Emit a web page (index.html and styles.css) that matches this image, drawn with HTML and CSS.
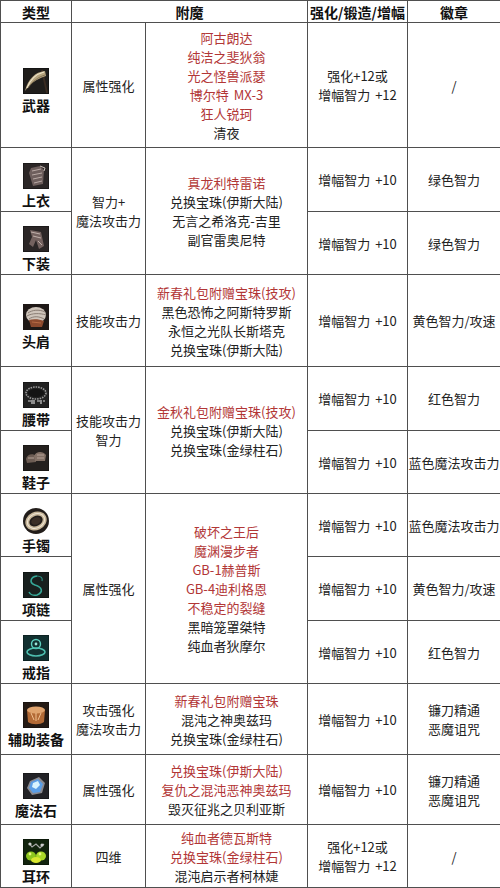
FILE: index.html
```html
<!DOCTYPE html>
<html lang="zh-CN">
<head>
<meta charset="utf-8">
<title>装备附魔表</title>
<link rel="stylesheet" href="styles.css">
</head>
<body>
<table class="gear">
  <colgroup>
    <col class="c-type"><col class="c-attr"><col class="c-ench"><col class="c-amp"><col class="c-badge">
  </colgroup>
  <thead>
    <tr class="r-head">
      <th>类型</th>
      <th colspan="2">附魔</th>
      <th>强化/锻造/增幅</th>
      <th>徽章</th>
    </tr>
  </thead>
  <tbody>
    <tr class="r-125">
      <td class="type">
        <svg class="icon" viewBox="0 0 26 26"><rect width="26" height="26" fill="#141414"/><rect x="1" y="1" width="24" height="24" fill="#1f1d1b"/><path d="M19 2 L24 25" stroke="#3b2c22" stroke-width="1.8"/><path d="M22 3 C12 4 5 11 2 23 C7 16 13 11 23 8 Z" fill="#b8a680"/><path d="M21 4 C13 6 7 12 4 20" stroke="#efe6cc" stroke-width="1.1" fill="none"/><path d="M22 7 C15 9 9 14 5 20" stroke="#7a6a4c" stroke-width="0.8" fill="none"/></svg>
        <span class="label">武器</span>
      </td>
      <td>属性强化</td>
      <td class="ench"><span class="red">阿古朗达<br>纯洁之斐狄翁<br>光之怪兽派瑟<br>博尔特 MX-3<br>狂人锐珂</span><br>清夜</td>
      <td>强化+12或<br>增幅智力 +12</td>
      <td>/</td>
    </tr>
    <tr class="r-64">
      <td class="type">
        <svg class="icon" viewBox="0 0 26 26"><rect width="26" height="26" fill="#1c1a1a"/><rect x="1" y="1" width="24" height="24" fill="#2b2626"/><path d="M8 5 L17 3 L21 7 L20 21 L10 23 L6 10 Z" fill="#6e5f5d"/><path d="M9 8 L18 6 M9 12 L19 10 M10 16 L19 14 M11 20 L19 18" stroke="#b9aaa5" stroke-width="1"/><path d="M17 3 L22 5 L21 8" stroke="#c9bcb6" stroke-width="1" fill="none"/></svg>
        <span class="label">上衣</span>
      </td>
      <td rowspan="2">智力+<br>魔法攻击力</td>
      <td rowspan="2" class="ench"><span class="red">真龙利特雷诺</span><br>兑换宝珠(伊斯大陆)<br>无言之希洛克-吉里<br>副官雷奥尼特</td>
      <td>增幅智力 +10</td>
      <td>绿色智力</td>
    </tr>
    <tr class="r-63">
      <td class="type">
        <svg class="icon" viewBox="0 0 26 26"><rect width="26" height="26" fill="#1c1a1a"/><rect x="1" y="1" width="24" height="24" fill="#2b2626"/><path d="M7 4 L18 6 L21 20 L16 23 L13 14 L10 21 L6 18 L9 11 Z" fill="#74625f"/><path d="M8 6 L17 8 M10 10 L18 12 M15 15 L19 19" stroke="#c0b0aa" stroke-width="1"/></svg>
        <span class="label">下装</span>
      </td>
      <td>增幅智力 +10</td>
      <td>绿色智力</td>
    </tr>
    <tr class="r-92">
      <td class="type">
        <svg class="icon" viewBox="0 0 26 26"><rect width="26" height="26" fill="#1e1816"/><ellipse cx="13" cy="11" rx="10" ry="8" fill="#cfc5bb"/><path d="M5 9 C9 6 16 5 22 8 M4 12 C9 9 17 9 23 11 M6 15 C10 12 16 12 21 15" stroke="#8a7d74" stroke-width="1" fill="none"/><path d="M6 16 C10 15 16 15 21 17 L19 23 L8 23 Z" fill="#8d4a2e"/><path d="M9 18 L18 19" stroke="#b86a44" stroke-width="1"/></svg>
        <span class="label">头肩</span>
      </td>
      <td>技能攻击力</td>
      <td class="ench"><span class="red">新春礼包附赠宝珠(技攻)</span><br>黑色恐怖之阿斯特罗斯<br>永恒之光队长斯塔克<br>兑换宝珠(伊斯大陆)</td>
      <td>增幅智力 +10</td>
      <td>黄色智力/攻速</td>
    </tr>
    <tr class="r-64">
      <td class="type">
        <svg class="icon" viewBox="0 0 26 26"><rect width="26" height="26" fill="#181818"/><rect x="1" y="1" width="24" height="24" fill="#222"/><ellipse cx="13" cy="11" rx="10" ry="6" fill="none" stroke="#9a9a9a" stroke-width="1.6" stroke-dasharray="1.5 1"/><ellipse cx="13" cy="11" rx="8" ry="4" fill="#141414"/><path d="M5 19 L8 19 M9 18 L9 22 M11 18 L11 22 M14 19 L17 19 M18 18 L18 22 M20 19 L22 19" stroke="#d6d6d6" stroke-width="1.2"/></svg>
        <span class="label">腰带</span>
      </td>
      <td rowspan="2">技能攻击力<br>智力</td>
      <td rowspan="2" class="ench"><span class="red">金秋礼包附赠宝珠(技攻)</span><br>兑换宝珠(伊斯大陆)<br>兑换宝珠(金绿柱石)</td>
      <td>增幅智力 +10</td>
      <td>红色智力</td>
    </tr>
    <tr class="r-63">
      <td class="type">
        <svg class="icon" viewBox="0 0 26 26"><rect width="26" height="26" fill="#1a1816"/><rect x="1" y="1" width="24" height="24" fill="#24201e"/><path d="M3 14 C4 9 10 8 13 11 L13 17 L4 18 Z" fill="#6d5d54"/><path d="M11 11 C13 6 20 6 23 10 L22 16 L12 16 Z" fill="#837166"/><path d="M5 13 L11 13 M14 10 L21 10 M14 13 L21 13" stroke="#b6a397" stroke-width="1"/></svg>
        <span class="label">鞋子</span>
      </td>
      <td>增幅智力 +10</td>
      <td>蓝色魔法攻击力</td>
    </tr>
    <tr class="r-63">
      <td class="type">
        <svg class="icon" viewBox="0 0 26 26"><rect width="26" height="26" fill="#fff"/><circle cx="13" cy="13" r="13" fill="#221d1a"/><ellipse cx="13" cy="13" rx="9" ry="7" transform="rotate(-25 13 13)" fill="none" stroke="#c7b699" stroke-width="4"/><ellipse cx="13" cy="13" rx="9" ry="7" transform="rotate(-25 13 13)" fill="none" stroke="#efe6d6" stroke-width="1"/><ellipse cx="13" cy="13" rx="5" ry="3.5" transform="rotate(-25 13 13)" fill="#3a2e26"/></svg>
        <span class="label">手镯</span>
      </td>
      <td rowspan="3">属性强化</td>
      <td rowspan="3" class="ench"><span class="red">破坏之王后<br>魔渊漫步者<br>GB-1赫普斯<br>GB-4迪利格恩<br>不稳定的裂缝</span><br>黑暗笼罩桀特<br>纯血者狄摩尔</td>
      <td>增幅智力 +10</td>
      <td>蓝色魔法攻击力</td>
    </tr>
    <tr class="r-64">
      <td class="type">
        <svg class="icon" viewBox="0 0 26 26"><rect width="26" height="26" fill="#101614"/><rect x="1" y="1" width="24" height="24" fill="#18201e"/><path d="M14 4 C7 5 6 11 12 13 C19 15 21 20 14 23 C10 24 7 22 6 20" fill="none" stroke="#36a898" stroke-width="1.6"/><path d="M14 4 C18 4 20 6 19 9" fill="none" stroke="#2c8c80" stroke-width="1.2"/></svg>
        <span class="label">项链</span>
      </td>
      <td>增幅智力 +10</td>
      <td>黄色智力/攻速</td>
    </tr>
    <tr class="r-63">
      <td class="type">
        <svg class="icon" viewBox="0 0 26 26"><rect width="26" height="26" fill="#0d2222"/><rect x="1" y="1" width="24" height="24" fill="#123030"/><circle cx="13" cy="9" r="4.5" fill="none" stroke="#5fd0c0" stroke-width="1.4"/><circle cx="13" cy="9" r="1.4" fill="#9ae8dc"/><ellipse cx="13" cy="17" rx="9" ry="4" fill="none" stroke="#4ec0b0" stroke-width="1.6"/></svg>
        <span class="label">戒指</span>
      </td>
      <td>增幅智力 +10</td>
      <td>红色智力</td>
    </tr>
    <tr class="r-71">
      <td class="type">
        <svg class="icon" viewBox="0 0 26 26"><rect width="26" height="26" fill="#1a1410"/><rect x="1" y="1" width="24" height="24" fill="#241a14"/><path d="M4 8 L22 8 L21 20 C17 23 9 23 5 20 Z" fill="#b36a35"/><ellipse cx="13" cy="8" rx="9" ry="3.5" fill="#e0a46e"/><path d="M8 11 L11 18 M13 11 L13 19 M18 11 L15 18" stroke="#f0c090" stroke-width="1"/></svg>
        <span class="label">辅助装备</span>
      </td>
      <td>攻击强化<br>魔法攻击力</td>
      <td class="ench"><span class="red">新春礼包附赠宝珠</span><br>混沌之神奥兹玛<br>兑换宝珠(金绿柱石)</td>
      <td>增幅智力 +10</td>
      <td>镰刀精通<br>恶魔诅咒</td>
    </tr>
    <tr class="r-70">
      <td class="type">
        <svg class="icon" viewBox="0 0 26 26"><rect width="26" height="26" fill="#18181a"/><rect x="1" y="1" width="24" height="24" fill="#222226"/><path d="M7 8 L16 4 L22 10 L19 20 L9 22 L4 15 Z" fill="#8a8a90"/><path d="M8 9 L15 6 L20 11 L17 19 L10 20 L6 15 Z" fill="#5b9ee6"/><path d="M10 10 L15 8 L17 12 L13 16 L9 14 Z" fill="#d8f4ff"/></svg>
        <span class="label">魔法石</span>
      </td>
      <td>属性强化</td>
      <td class="ench"><span class="red">兑换宝珠(伊斯大陆)<br>复仇之混沌恶神奥兹玛</span><br>毁灭征兆之贝利亚斯</td>
      <td>增幅智力 +10</td>
      <td>镰刀精通<br>恶魔诅咒</td>
    </tr>
    <tr class="r-63">
      <td class="type">
        <svg class="icon" viewBox="0 0 26 26"><rect width="26" height="26" fill="#0c1a0a"/><rect x="1" y="1" width="24" height="24" fill="#12240e"/><path d="M6 4 L9 8 L13 5 L17 9 L21 5" fill="none" stroke="#a8a8a8" stroke-width="1.2"/><circle cx="7" cy="5" r="1.6" fill="#cfcfcf"/><circle cx="19" cy="6" r="1.6" fill="#cfcfcf"/><ellipse cx="8" cy="17" rx="5" ry="4.5" fill="#8cc61e"/><ellipse cx="18" cy="17" rx="5" ry="4.5" fill="#a8d828"/><ellipse cx="13" cy="21" rx="5" ry="3" fill="#d8e830"/><circle cx="7" cy="15" r="1.4" fill="#e8f880"/><circle cx="17" cy="15" r="1.4" fill="#e8f880"/></svg>
        <span class="label">耳环</span>
      </td>
      <td>四维</td>
      <td class="ench"><span class="red">纯血者德瓦斯特<br>兑换宝珠(金绿柱石)</span><br>混沌启示者柯林婕</td>
      <td>强化+12或<br>增幅智力 +12</td>
      <td>/</td>
    </tr>
  </tbody>
</table>
</body>
</html>
```

FILE: styles.css
```css
html, body {
  margin: 0;
  padding: 0;
  background: #ffffff;
}

body {
  font-family: "Noto Sans CJK SC", "Noto Sans", sans-serif;
  color: #222222;
}

.gear {
  width: 500px;
  table-layout: fixed;
  border-collapse: collapse;
  font-size: 13px;
  line-height: 19px;
  word-spacing: 2px;
}

.c-type { width: 71px; }
.c-attr { width: 74px; }
.c-ench { width: 162px; }
.c-amp { width: 100px; }
.c-badge { width: 93px; }

.gear th,
.gear td {
  border: 1px solid #4f4f4f;
  padding: 0;
  text-align: center;
  vertical-align: middle;
  white-space: nowrap;
  overflow: hidden;
}

.gear th {
  font-size: 14px;
  font-weight: bold;
  color: #111111;
  line-height: 18px;
  word-spacing: 0;
}

.r-head { height: 22px; }
.r-125 { height: 125px; }
.r-92 { height: 92px; }
.r-71 { height: 71px; }
.r-70 { height: 70px; }
.r-64 { height: 64px; }
.r-63 { height: 63px; }

.gear td.type {
  padding-top: 12px;
}

.icon {
  display: block;
  width: 26px;
  height: 26px;
  margin: 0 auto;
}

.label {
  display: block;
  margin-top: 3px;
  font-size: 14px;
  font-weight: bold;
  color: #111111;
  line-height: 17px;
}

.red {
  color: #b23636;
}
```
